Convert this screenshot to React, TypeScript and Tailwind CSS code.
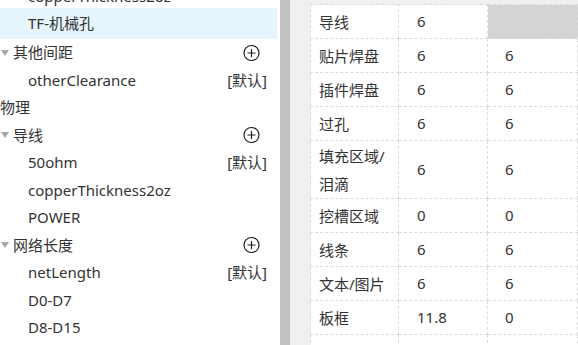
import React from 'react';

type TreeRow = {
  label: string;
  level: 0 | 1 | 2;
  group?: boolean;
  tag?: string;
  selected?: boolean;
  h?: string;
};

const rows: TreeRow[] = [
  { label: 'copperThickness2oz', level: 2, h: 'h-[24px]' },
  { label: 'TF-机械孔', level: 2, selected: true, h: 'h-[31px]' },
  { label: '其他间距', level: 1, group: true },
  { label: 'otherClearance', level: 2, tag: '[默认]' },
  { label: '物理', level: 0 },
  { label: '导线', level: 1, group: true },
  { label: '50ohm', level: 2, tag: '[默认]' },
  { label: 'copperThickness2oz', level: 2 },
  { label: 'POWER', level: 2 },
  { label: '网络长度', level: 1, group: true },
  { label: 'netLength', level: 2, tag: '[默认]' },
  { label: 'D0-D7', level: 2 },
  { label: 'D8-D15', level: 2 },
];

const tableRows: { name: string[]; a: string; b: string | null; tall?: boolean }[] = [
  { name: ['导线'], a: '6', b: null },
  { name: ['贴片焊盘'], a: '6', b: '6' },
  { name: ['插件焊盘'], a: '6', b: '6' },
  { name: ['过孔'], a: '6', b: '6' },
  { name: ['填充区域/', '泪滴'], a: '6', b: '6', tall: true },
  { name: ['挖槽区域'], a: '0', b: '0' },
  { name: ['线条'], a: '6', b: '6' },
  { name: ['文本/图片'], a: '6', b: '6' },
  { name: ['板框'], a: '11.8', b: '0' },
  { name: [''], a: '', b: '' },
];

function Caret() {
  return (
    <svg width="8" height="6" viewBox="0 0 8 6" className="absolute left-[1px] top-1/2 -translate-y-1/2">
      <polygon points="0,0 8,0 4,6" fill="#a6a6a6" />
    </svg>
  );
}

function PlusCircle() {
  return (
    <svg width="17" height="17" viewBox="0 0 17 17" className="absolute left-[243px] top-1/2 -translate-y-1/2">
      <circle cx="8.5" cy="8.5" r="7.5" fill="none" stroke="#222" strokeWidth="1.2" />
      <line x1="4.5" y1="8.5" x2="12.5" y2="8.5" stroke="#222" strokeWidth="1.2" />
      <line x1="8.5" y1="4.5" x2="8.5" y2="12.5" stroke="#222" strokeWidth="1.2" />
    </svg>
  );
}

export default function App() {
  return (
    <div
      className="flex h-[345px] w-[578px] overflow-hidden bg-white text-[15px] text-[#333]"
      style={{ fontFamily: '"Noto Sans", "Noto Sans CJK SC", sans-serif' }}
    >
      <div className="w-[277px] shrink-0 -mt-[16px]">
        {rows.map((r, i) => (
          <div
            key={i}
            className={`relative flex items-center ${r.h ?? 'h-[27.5px]'} ${r.selected ? 'bg-[#e6f4fd]' : ''} ${
              r.level === 0 ? 'pl-0' : r.level === 1 ? 'pl-[13px]' : 'pl-[28px]'
            }`}
          >
            {r.group && <Caret />}
            <span className="leading-none">{r.label}</span>
            {r.group && <PlusCircle />}
            {r.tag && <span className="absolute right-[10px] leading-none">{r.tag}</span>}
          </div>
        ))}
      </div>
      <div className="w-[3px] shrink-0 bg-white" />
      <div className="w-[10px] shrink-0 bg-[#c1c1c1]" />
      <div className="flex-1 bg-[#f0f0f0] pl-[20px] pt-[4px]">
        <table className="w-[267px] border-collapse table-fixed">
          <colgroup>
            <col className="w-[88px]" />
            <col className="w-[89px]" />
            <col className="w-[90px]" />
          </colgroup>
          <tbody>
            {tableRows.map((t, i) => (
              <tr key={i} className={t.tall ? 'h-[58px]' : 'h-[34px]'}>
                <td className="border border-dashed border-[#dcdcdc] bg-white pl-[8px] leading-[28px]">
                  {t.name.map((n, j) => (
                    <div key={j}>{n}</div>
                  ))}
                </td>
                <td className="border border-dashed border-[#dcdcdc] bg-white pl-[18px]">{t.a}</td>
                <td
                  className={`border border-dashed border-[#dcdcdc] pl-[17px] ${
                    t.b === null ? 'bg-[#d4d4d4]' : 'bg-white'
                  }`}
                >
                  {t.b}
                </td>
              </tr>
            ))}
          </tbody>
        </table>
      </div>
    </div>
  );
}
